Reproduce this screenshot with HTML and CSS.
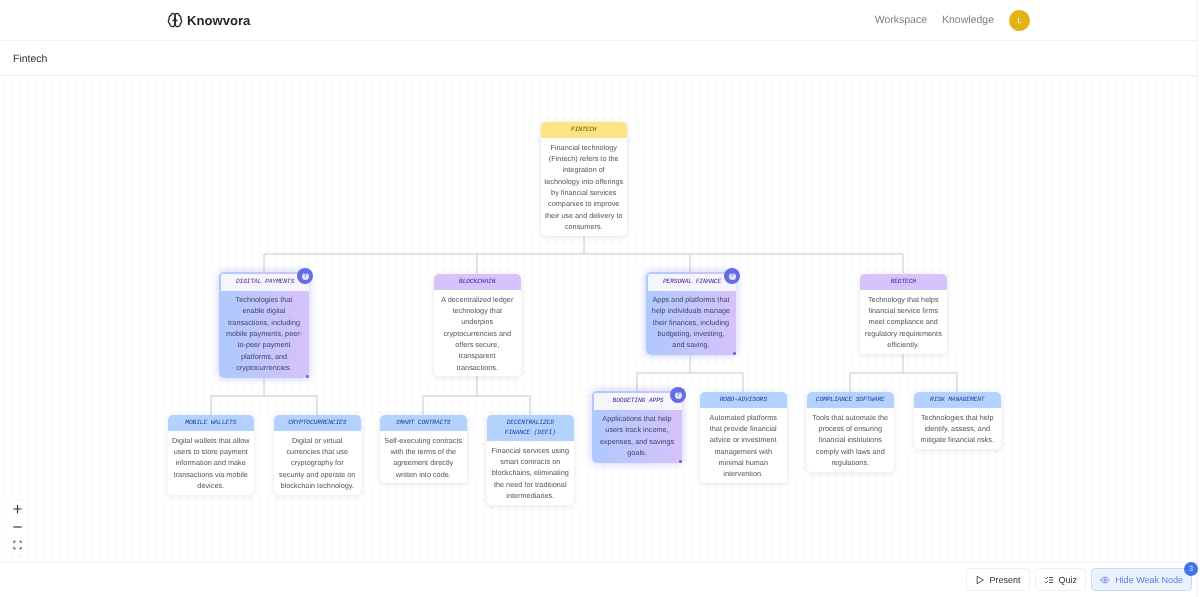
FILE: index.html
```html
<!DOCTYPE html>
<html lang="en">
<head>
<meta charset="utf-8">
<title>Knowvora – Fintech</title>
<link rel="stylesheet" href="styles.css">
</head>
<body>
<div class="app">
  <header class="topbar">
    <div class="brand">
      <svg class="brand-icon" viewBox="0 0 24 24" fill="none" stroke="currentColor" stroke-width="2" stroke-linecap="round" stroke-linejoin="round">
        <path d="M12 5a3 3 0 1 0-5.997.125 4 4 0 0 0-2.526 5.770 4 4 0 0 0 .556 6.588A4 4 0 1 0 12 18Z"/>
        <path d="M12 5a3 3 0 1 1 5.997.125 4 4 0 0 1 2.526 5.770 4 4 0 0 1-.556 6.588A4 4 0 1 1 12 18Z"/>
        <path d="M15 13a4.500 4.500 0 0 1-3-4 4.500 4.500 0 0 1-3 4"/>
        <path d="M12 18V9"/>
      </svg>
      <span class="brand-name">Knowvora</span>
    </div>
    <nav class="nav">
      <a class="nav-link">Workspace</a>
      <a class="nav-link">Knowledge</a>
      <span class="avatar">L</span>
    </nav>
  </header>
  <div class="titlebar">Fintech</div>
  <main class="canvas">
    <svg class="links" viewBox="0 0 1200 486" fill="none">
      <path d="M584 160V178M264 197V178H903V197M477 178V198M690 178V196"/>
      <path d="M264 302V320M211 339V320H317V339"/>
      <path d="M477 300V320M423 339V320H530V339"/>
      <path d="M690 279V297M637 315V297H743V316"/>
      <path d="M903 277V297M850 316V297H957V316"/>
    </svg>

    <article class="node root n1">
      <h3 class="node-head">Fintech</h3>
      <p class="node-text">Financial technology (Fintech) refers to the integration of technology into offerings by financial services companies to improve their use and delivery to consumers.</p>
    </article>

    <article class="node weak n2">
      <h3 class="node-head">Digital Payments</h3>
      <p class="node-text">Technologies that enable digital transactions, including mobile payments, peer-to-peer payment platforms, and cryptocurrencies.</p>
      <span class="weak-badge"><i>?</i></span><span class="corner"></span>
    </article>
    <article class="node branch n3">
      <h3 class="node-head">Blockchain</h3>
      <p class="node-text">A decentralized ledger technology that underpins cryptocurrencies and offers secure, transparent transactions.</p>
    </article>
    <article class="node weak n4">
      <h3 class="node-head">Personal Finance</h3>
      <p class="node-text">Apps and platforms that help individuals manage their finances, including budgeting, investing, and saving.</p>
      <span class="weak-badge"><i>?</i></span><span class="corner"></span>
    </article>
    <article class="node branch n5">
      <h3 class="node-head">RegTech</h3>
      <p class="node-text">Technology that helps financial service firms meet compliance and regulatory requirements efficiently.</p>
    </article>

    <article class="node leaf n6">
      <h3 class="node-head">Mobile Wallets</h3>
      <p class="node-text">Digital wallets that allow users to store payment information and make transactions via mobile devices.</p>
    </article>
    <article class="node leaf n7">
      <h3 class="node-head">Cryptocurrencies</h3>
      <p class="node-text">Digital or virtual currencies that use cryptography for security and operate on blockchain technology.</p>
    </article>
    <article class="node leaf n8">
      <h3 class="node-head">Smart Contracts</h3>
      <p class="node-text">Self-executing contracts with the terms of the agreement directly written into code.</p>
    </article>
    <article class="node leaf n9">
      <h3 class="node-head">Decentralized Finance (DeFi)</h3>
      <p class="node-text">Financial services using smart contracts on blockchains, eliminating the need for traditional intermediaries.</p>
    </article>
    <article class="node weak n10">
      <h3 class="node-head">Budgeting Apps</h3>
      <p class="node-text">Applications that help users track income, expenses, and savings goals.</p>
      <span class="weak-badge"><i>?</i></span><span class="corner"></span>
    </article>
    <article class="node leaf n11">
      <h3 class="node-head">Robo-Advisors</h3>
      <p class="node-text">Automated platforms that provide financial advice or investment management with minimal human intervention.</p>
    </article>
    <article class="node leaf n12">
      <h3 class="node-head">Compliance Software</h3>
      <p class="node-text">Tools that automate the process of ensuring financial institutions comply with laws and regulations.</p>
    </article>
    <article class="node leaf n13">
      <h3 class="node-head">Risk Management</h3>
      <p class="node-text">Technologies that help identify, assess, and mitigate financial risks.</p>
    </article>

    <div class="zoom">
      <button class="zoom-btn"><svg viewBox="0 0 12 12"><path d="M6 1.500v9M1.500 6h9"/></svg></button>
      <button class="zoom-btn"><svg viewBox="0 0 12 12"><path d="M1.500 6h9"/></svg></button>
      <button class="zoom-btn"><svg viewBox="0 0 12 12"><path class="thin" d="M2 4V2h2M8 2h2v2M10 8v2H8M4 10H2V8"/></svg></button>
    </div>
  </main>
  <footer class="actions">
    <button class="btn">
      <svg class="btn-icon" viewBox="0 0 24 24"><path d="M6 3.500 20 12 6 20.500z"/></svg>Present
    </button>
    <button class="btn">
      <svg class="btn-icon" viewBox="0 0 24 24"><path d="m3 7 2 2 4-4M3 17l2 2 4-4M13 6h8M13 12h8M13 18h8"/></svg>Quiz
    </button>
    <button class="btn btn-active">
      <svg class="btn-icon" viewBox="0 0 24 24"><path d="M2 12s3.500-7 10-7 10 7 10 7-3.500 7-10 7-10-7-10-7z"/><circle cx="12" cy="12" r="3"/></svg>Hide Weak Node
      <span class="count">3</span>
    </button>
  </footer>
</div>
</body>
</html>
```
FILE: styles.css
```css
* { box-sizing: border-box; }
html, body { margin: 0; height: 100%; }
body {
  font-family: "Liberation Sans", Arial, sans-serif;
  color: #222;
  background: #fff;
  overflow: hidden;
  text-rendering: geometricPrecision;
}
.app {
  width: 1198px;
  height: 597px;
  display: flex;
  flex-direction: column;
  border-right: 1px solid #f4f4f5;
  filter: blur(.3px);
}

/* top bar */
.topbar {
  height: 41px;
  flex: none;
  border-bottom: 1px solid #f0f0f2;
  display: flex;
  align-items: center;
  justify-content: space-between;
  padding: 0 167px;
}
.brand { display: flex; align-items: center; gap: 4px; color: #262626; }
.brand-icon { width: 16px; height: 16px; }
.brand-name { font-size: 13.100px; font-weight: 700; }
.nav { display: flex; align-items: center; gap: 15px; }
.nav-link { font-size: 10.500px; color: #808080; }
.avatar {
  width: 21px;
  height: 21px;
  border-radius: 50%;
  background: #e3b213;
  color: #fff;
  font-size: 8px;
  display: flex;
  align-items: center;
  justify-content: center;
}

/* title */
.titlebar {
  height: 35px;
  flex: none;
  border-bottom: 1px solid #f0f0f2;
  padding: 1px 0 0 13px;
  display: flex;
  align-items: center;
  font-size: 10.500px;
  color: #333;
}

/* canvas */
.canvas {
  position: relative;
  flex: 1;
  overflow: hidden;
  background-color: #fff;
  background-image: radial-gradient(circle, #f5f5f6 0.7px, transparent 1px);
  background-size: 8px 8px;
  background-position: 0 4px;
}
.links { position: absolute; left: 0; top: 0; width: 1200px; height: 486px; }
.links path { stroke: #c6c8cc; stroke-width: 1; }

.node {
  position: absolute;
  width: 86.500px;
  background: #fff;
  border-radius: 5px;
  box-shadow: 0 1px 6px rgba(30, 40, 70, .12);
  display: flex;
  flex-direction: column;
}
.node-head {
  margin: 0;
  padding: 3px 6px;
  min-height: 16px;
  border-radius: 5px 5px 0 0;
  font-family: "Liberation Mono", monospace;
  font-style: italic;
  font-weight: 400;
  font-size: 6.300px;
  line-height: 10px;
  letter-spacing: -.15px;
  text-transform: uppercase;
  text-align: center;
}
.node-text {
  margin: 0;
  padding: 3.500px 3.750px 3.500px;
  font-size: 7.300px;
  line-height: 11.350px;
  color: #50545e;
  text-align: center;
}
.root .node-head { background: #fde286; color: #6b5206; }
.branch .node-head { background: #d7c2fb; color: #47209a; }
.leaf .node-head { background: #b3d2fe; color: #1e3f9c; }

.weak {
  width: 90px;
  background: linear-gradient(90deg, #aec9fe, #d6c2fb);
  box-shadow: 0 0 7px 1px rgba(120, 130, 245, .34);
}
.weak .node-head {
  margin: 2px 0 0 2px;
  background: #f5f6fc;
  color: #47209a;
  padding: 3px 4px;
  min-height: 17px;
  border-radius: 2px 0 0 0;
}
.weak .node-text { color: #3f4663; padding: 3px 5px 4.500px; }
.weak-badge {
  position: absolute;
  right: -4px;
  top: -4px;
  width: 16px;
  height: 16px;
  border-radius: 50%;
  background: #636ce6;
  display: flex;
  align-items: center;
  justify-content: center;
}
.weak-badge i {
  width: 7px;
  height: 7px;
  border-radius: 50%;
  background: #dfe3fb;
  color: #636ce6;
  font-size: 6px;
  font-style: normal;
  font-weight: 700;
  line-height: 7px;
  text-align: center;
}
.corner {
  position: absolute;
  right: 0;
  bottom: 0;
  width: 3px;
  height: 3px;
  background: #636ce6;
  border-radius: 1px;
}

/* node places on the diagram */
.n1 { left: 540.500px; top: 46px; }
.n2 { left: 219px; top: 196px; }
.n3 { left: 434px; top: 198px; }
.n4 { left: 646px; top: 196px; }
.n5 { left: 860px; top: 198px; }
.n6 { left: 167.500px; top: 339px; }
.n7 { left: 274px; top: 339px; }
.n8 { left: 380px; top: 339px; }
.n9 { left: 487px; top: 339px; }
.n10 { left: 592px; top: 315px; }
.n11 { left: 700px; top: 316px; }
.n12 { left: 807px; top: 316px; }
.n13 { left: 914px; top: 316px; }

/* zoom controls */
.zoom {
  position: absolute;
  left: 8px;
  bottom: 8px;
  width: 19px;
  display: flex;
  flex-direction: column;
  background: #fff;
  box-shadow: 0 0 2px rgba(0, 0, 0, .05);
}
.zoom-btn {
  width: 19px;
  height: 18px;
  padding: 3px 4px;
  border: 0;
  background: transparent;
  display: flex;
}
.zoom-btn svg { width: 12px; height: 12px; }
.zoom-btn path { fill: none; stroke: #333; stroke-width: 1.300; }
.zoom-btn path.thin { stroke-width: 1; }

/* footer */
.actions {
  height: 35px;
  flex: none;
  border-top: 1px solid #f0f0f2;
  display: flex;
  align-items: center;
  justify-content: flex-end;
  gap: 5px;
  padding: 0 5px 1px 0;
}
.btn {
  position: relative;
  height: 23px;
  padding: 0 8px;
  display: flex;
  align-items: center;
  gap: 5px;
  border: 1px solid #eeeff1;
  border-radius: 4px;
  background: #fff;
  color: #333;
  font: 9px "Liberation Sans", Arial, sans-serif;
}
.btn-icon {
  width: 10px;
  height: 10px;
  fill: none;
  stroke: currentColor;
  stroke-width: 2;
  stroke-linecap: round;
  stroke-linejoin: round;
}
.btn-active {
  background: #ebf2fe;
  border-color: #c6daf9;
  color: #5b7de0;
}
.count {
  position: absolute;
  right: -7px;
  top: -7px;
  width: 14px;
  height: 14px;
  border-radius: 50%;
  background: #3f74ee;
  color: #dfe8fd;
  font-size: 7px;
  line-height: 14px;
  text-align: center;
}
```
